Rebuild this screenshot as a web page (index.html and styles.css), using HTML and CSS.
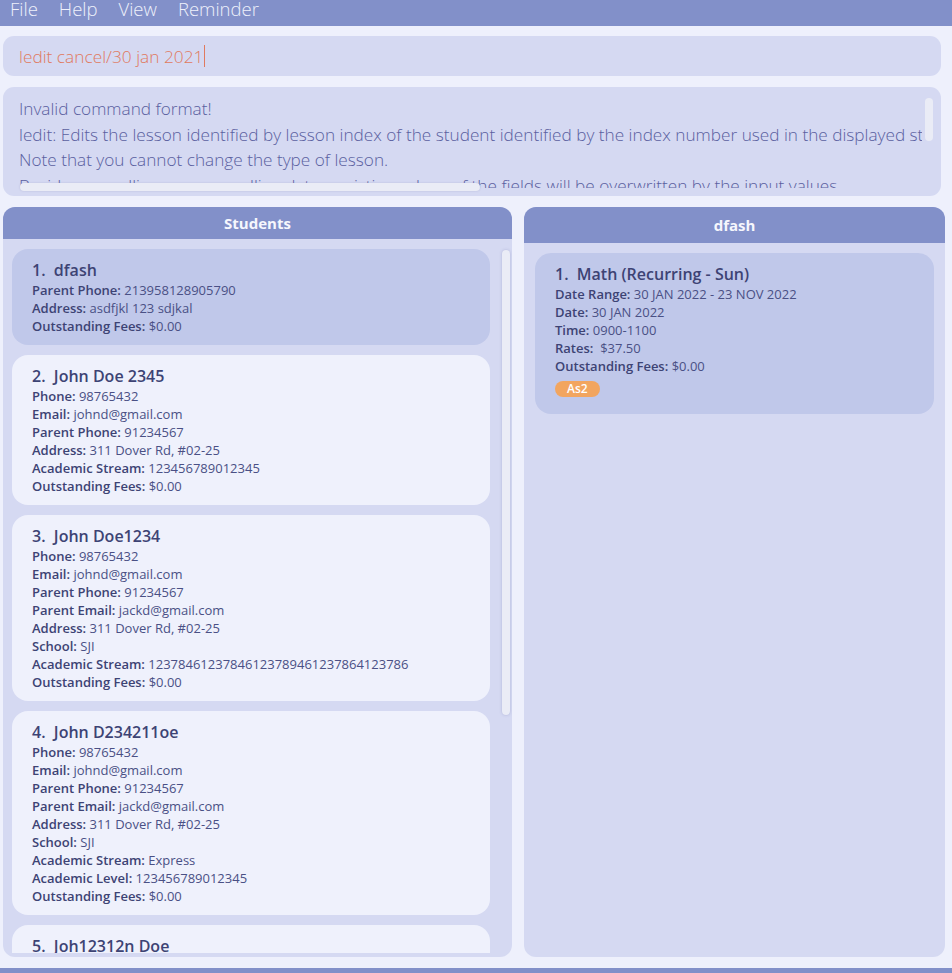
FILE: index.html
```html
<!DOCTYPE html>
<html>
<head>
<meta charset="utf-8">
<link rel="stylesheet" href="styles.css">
</head>
<body>
<div class="app">
  <nav class="menubar">
    <span class="menu">File</span>
    <span class="menu">Help</span>
    <span class="menu">View</span>
    <span class="menu">Reminder</span>
  </nav>

  <div class="command">
    <span class="command-text">ledit cancel/30 jan 2021</span><span class="caret"></span>
  </div>

  <div class="result">
    <div class="result-text">
      <div>Invalid command format!</div>
      <div class="nowrap">ledit: Edits the lesson identified by lesson index of the student identified by the index number used in the displayed student list.</div>
      <div>Note that you cannot change the type of lesson.</div>
      <div class="nowrap">Besides cancelling or uncancelling dates, existing values of the fields will be overwritten by the input values.</div>
    </div>
    <div class="vscroll"></div>
    <div class="hscroll"></div>
  </div>

  <div class="panels">
    <section class="panel students">
      <header class="panel-head">Students</header>
      <div class="list">
        <div class="cards">
          <article class="card selected">
            <h3 class="card-title">1.&nbsp; dfash</h3>
            <p><b>Parent Phone:</b> 213958128905790</p>
            <p><b>Address:</b> asdfjkl 123 sdjkal</p>
            <p><b>Outstanding Fees:</b> $0.00</p>
          </article>
          <article class="card">
            <h3 class="card-title">2.&nbsp; John Doe 2345</h3>
            <p><b>Phone:</b> 98765432</p>
            <p><b>Email:</b> johnd@gmail.com</p>
            <p><b>Parent Phone:</b> 91234567</p>
            <p><b>Address:</b> 311 Dover Rd, #02-25</p>
            <p><b>Academic Stream:</b> 123456789012345</p>
            <p><b>Outstanding Fees:</b> $0.00</p>
          </article>
          <article class="card">
            <h3 class="card-title">3.&nbsp; John Doe1234</h3>
            <p><b>Phone:</b> 98765432</p>
            <p><b>Email:</b> johnd@gmail.com</p>
            <p><b>Parent Phone:</b> 91234567</p>
            <p><b>Parent Email:</b> jackd@gmail.com</p>
            <p><b>Address:</b> 311 Dover Rd, #02-25</p>
            <p><b>School:</b> SJI</p>
            <p><b>Academic Stream:</b> 12378461237846123789461237864123786</p>
            <p><b>Outstanding Fees:</b> $0.00</p>
          </article>
          <article class="card">
            <h3 class="card-title">4.&nbsp; John D234211oe</h3>
            <p><b>Phone:</b> 98765432</p>
            <p><b>Email:</b> johnd@gmail.com</p>
            <p><b>Parent Phone:</b> 91234567</p>
            <p><b>Parent Email:</b> jackd@gmail.com</p>
            <p><b>Address:</b> 311 Dover Rd, #02-25</p>
            <p><b>School:</b> SJI</p>
            <p><b>Academic Stream:</b> Express</p>
            <p><b>Academic Level:</b> 123456789012345</p>
            <p><b>Outstanding Fees:</b> $0.00</p>
          </article>
          <article class="card">
            <h3 class="card-title">5.&nbsp; Joh12312n Doe</h3>
            <p><b>Phone:</b> 98765432</p>
            <p><b>Email:</b> johnd@gmail.com</p>
          </article>
        </div>
        <div class="list-scroll"></div>
      </div>
    </section>

    <section class="panel lessons">
      <header class="panel-head tall">dfash</header>
      <div class="lesson-list">
        <article class="card selected lesson">
          <h3 class="card-title">1.&nbsp; Math (Recurring - Sun)</h3>
          <p><b>Date Range:</b> 30 JAN 2022 - 23 NOV 2022</p>
          <p><b>Date:</b> 30 JAN 2022</p>
          <p><b>Time:</b> 0900-1100</p>
          <p><b>Rates:</b>&nbsp; $37.50</p>
          <p><b>Outstanding Fees:</b> $0.00</p>
          <span class="tag">As2</span>
        </article>
      </div>
    </section>
  </div>

  <footer class="statusbar"></footer>
</div>
</body>
</html>
```

FILE: styles.css
```css
* { box-sizing: border-box; }

html, body {
  margin: 0;
  padding: 0;
  height: 100%;
  overflow: hidden;
}

body {
  background: #eef0fc;
  font-family: "Open Sans", "Noto Sans", sans-serif;
  color: #3d4374;
}

.app {
  display: flex;
  flex-direction: column;
  height: 973px;
}

.menubar {
  height: 26px;
  background: #8290c9;
  display: flex;
  align-items: flex-start;
  padding-left: 10px;
}

.menu {
  font-size: 18.5px;
  font-weight: 300;
  color: #eef0fb;
  margin-right: 21px;
  line-height: 18px;
}

.command {
  margin: 10px 11px 0 3px;
  height: 40px;
  background: #d5d9f2;
  border-radius: 11px;
  display: flex;
  align-items: center;
  padding-left: 16px;
}

.command-text {
  font-size: 17.3px;
  font-weight: 300;
  color: #e07a5f;
}

.caret {
  display: inline-block;
  width: 1px;
  height: 22px;
  background: #e07a5f;
  margin-left: 1px;
}

.result {
  position: relative;
  margin: 11px 11px 0 3px;
  height: 109px;
  background: #d5d9f2;
  border-radius: 11px;
  overflow: hidden;
}

.result-text {
  position: absolute;
  left: 16px;
  right: 19px;
  top: 9px;
  height: 92px;
  overflow: hidden;
  font-size: 17.2px;
  font-weight: 300;
  line-height: 25.5px;
  color: #5a60a0;
}

.nowrap { white-space: nowrap; }

.vscroll {
  position: absolute;
  right: 8px;
  top: 11px;
  width: 8px;
  height: 43px;
  background: #eaecf6;
  border-radius: 4px;
}

.hscroll {
  position: absolute;
  left: 17px;
  top: 96px;
  width: 460px;
  height: 8px;
  background: #eaecf6;
  border-radius: 4px;
  box-shadow: 0 0 2px rgba(90, 96, 160, 0.25);
}

.panels {
  display: flex;
  gap: 12px;
  margin: 11px 7px 0 3px;
  height: 750px;
}

.panel {
  background: #d5d9f2;
  border-radius: 12px;
  overflow: hidden;
  display: flex;
  flex-direction: column;
}

.students { width: 509px; }
.lessons { flex: 1; }

.panel-head {
  background: #8290c9;
  color: #f6f7fd;
  font-weight: 700;
  font-size: 15px;
  text-align: center;
  height: 32px;
  line-height: 32px;
  flex: none;
}

.panel-head.tall {
  height: 36px;
  line-height: 36px;
}

.list {
  position: relative;
  flex: 1;
  margin-bottom: 4px;
  overflow: hidden;
}

.cards {
  display: flex;
  flex-direction: column;
  gap: 10px;
  padding: 10px 0 0 9px;
  width: 487px;
}

.list-scroll {
  position: absolute;
  left: 499px;
  top: 11px;
  width: 8px;
  height: 465px;
  background: #eaecf6;
  border-radius: 4px;
  box-shadow: 0 0 3px rgba(90, 96, 160, 0.3);
}

.card {
  background: #eff1fc;
  border-radius: 16px;
  padding: 10px 20px 10px 20px;
}

.card.selected {
  background: #c0c8ea;
}

.card-title {
  margin: 0;
  font-size: 16px;
  font-weight: 600;
  line-height: 22px;
  color: #3d4374;
}

.card p {
  margin: 0;
  font-size: 13px;
  line-height: 18px;
  color: #4a5085;
}

.card b {
  font-weight: 600;
  color: #3d4374;
}

.lesson-list {
  padding: 10px 11px 0 11px;
}

.lesson {
  padding-bottom: 16px;
}

.tag {
  display: inline-block;
  margin-top: 6px;
  background: #f2a55f;
  color: #ffffff;
  font-size: 12px;
  font-weight: 600;
  line-height: 16px;
  height: 16px;
  padding: 0 12px;
  border-radius: 8px;
}

.statusbar {
  margin-top: 11px;
  flex: 1;
  background: #8290c9;
}
```
